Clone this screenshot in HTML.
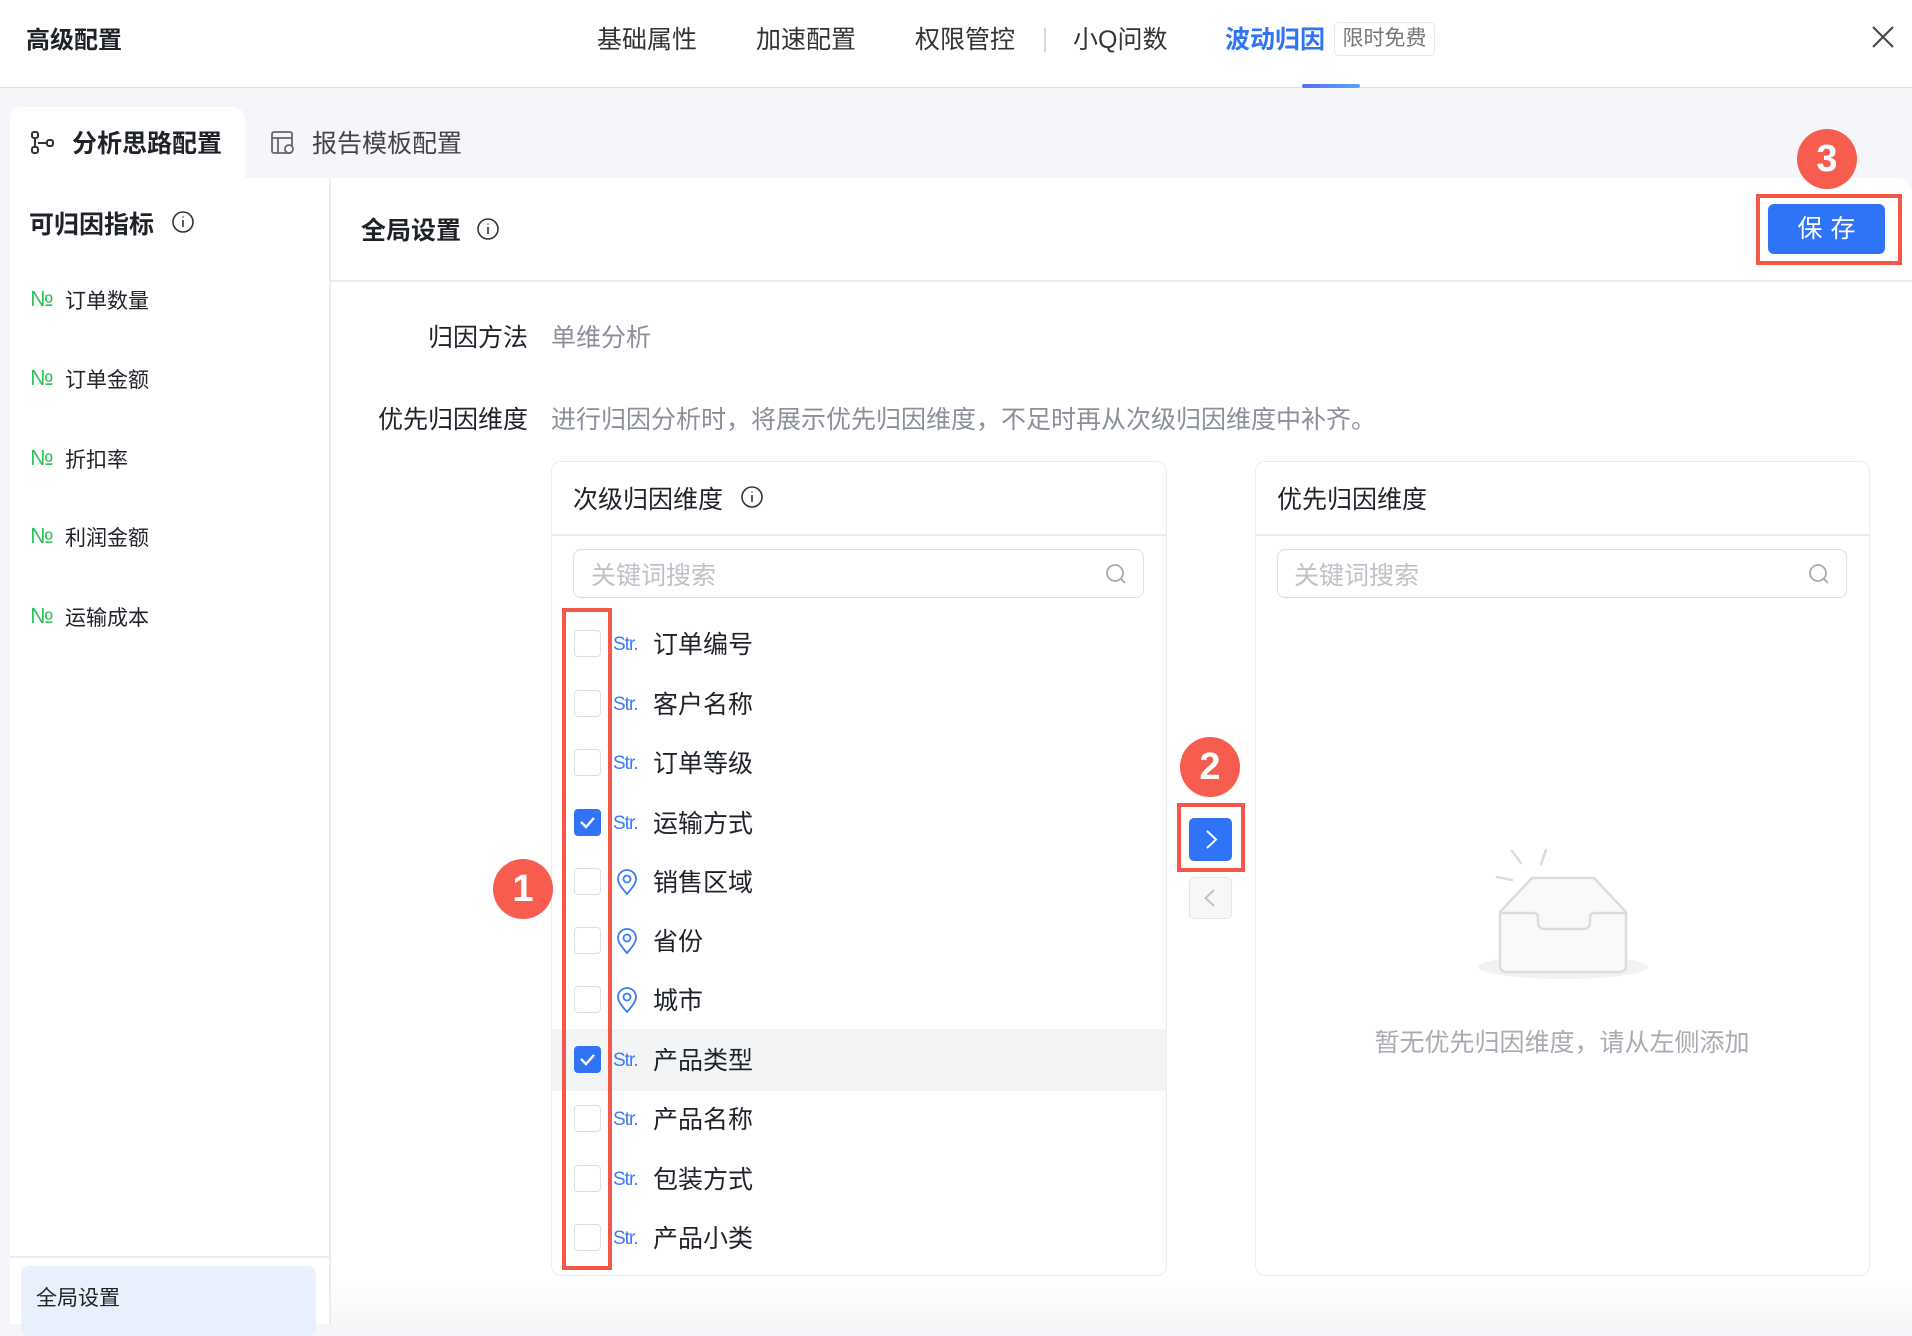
<!DOCTYPE html>
<html><head><meta charset="utf-8"><style>
*{margin:0;padding:0;box-sizing:border-box}
body{width:1912px;height:1324px;overflow:hidden;background:#f5f6f9;font-family:"Liberation Sans","Noto Sans CJK SC",sans-serif;color:#1f2329;position:relative}
.a{position:absolute;white-space:nowrap}
.cb{position:absolute;left:574px;width:27px;height:27px;border:1.5px solid #dcdfe4;border-radius:4px;background:#fff}
.cb.on{background:#2f73f6;border-color:#2f73f6}
.str{position:absolute;left:613px;color:#3b7cf7;font-size:19px;letter-spacing:-1px}
.it{position:absolute;left:653px;font-size:25px;color:#1f2329}
.no{color:#2fc25b;font-size:22px;position:absolute;left:30px}
.li{position:absolute;left:65px;font-size:21px}
.circ{position:absolute;width:60px;height:60px;border-radius:50%;background:#f65d4e;color:#fff;font-size:38px;text-align:center;line-height:60px;font-weight:bold}
.rb{position:absolute;border:4px solid #f2574a}
</style></head><body>
<!-- header -->
<div class="a" style="left:0;top:0;width:1912px;height:88px;background:#fff;border-bottom:1.5px solid #dedfe3"></div>
<div class="a" style="left:26px;top:20px;font-size:24px;font-weight:bold;color:#1f2329">高级配置</div>
<div class="a" style="left:597px;top:20px;font-size:25px;color:#333">基础属性</div>
<div class="a" style="left:756px;top:20px;font-size:25px;color:#333">加速配置</div>
<div class="a" style="left:915px;top:20px;font-size:25px;color:#333">权限管控</div>
<div class="a" style="left:1044px;top:28px;width:1.5px;height:24px;background:#d8d8d8"></div>
<div class="a" style="left:1073px;top:20px;font-size:25px;color:#333">小Q问数</div>
<div class="a" style="left:1225px;top:20px;font-size:25px;color:#2f73f6;font-weight:bold">波动归因</div>
<div class="a" style="left:1334px;top:22px;width:101px;height:34px;border:1px solid #e8e8e8;border-radius:5px;font-size:21px;color:#777;text-align:center;line-height:32px">限时免费</div>
<div class="a" style="left:1302px;top:84px;width:58px;height:4px;border-radius:2px;background:linear-gradient(90deg,#5b6cf5,#5aa4f8)"></div>
<svg class="a" style="left:1870px;top:24px" width="26" height="26" viewBox="0 0 26 26"><path d="M3 3L23 23M23 3L3 23" stroke="#444" stroke-width="2"/></svg>
<!-- tabs -->
<div class="a" style="left:10px;top:107px;width:235px;height:80px;background:#fff;border-radius:12px 12px 0 0"></div>
<svg class="a" style="left:30px;top:130px" width="26" height="26" viewBox="0 0 26 26" fill="none" stroke="#333" stroke-width="2"><rect x="2" y="2" width="6" height="6" rx="2"/><rect x="2" y="17" width="6" height="6" rx="2"/><rect x="17" y="10" width="6" height="6" rx="2"/><path d="M5 8v9M8 13h9"/></svg>
<div class="a" style="left:72px;top:124px;font-size:25px;font-weight:bold">分析思路配置</div>
<svg class="a" style="left:270px;top:130px" width="26" height="26" viewBox="0 0 26 26" fill="none" stroke="#666" stroke-width="1.8"><rect x="2" y="2" width="20" height="21" rx="2"/><path d="M2 8h20M8 8v15"/><circle cx="19" cy="19" r="4" fill="#fff"/></svg>
<div class="a" style="left:312px;top:124px;font-size:25px;color:#444">报告模板配置</div>
<!-- panels -->
<div class="a" style="left:10px;top:178px;width:320px;height:1146px;background:#fff"></div>
<div class="a" style="left:329px;top:178px;width:1.5px;height:1146px;background:#ececec"></div>
<div class="a" style="left:331px;top:178px;width:1581px;height:1146px;background:#fff;border-radius:0 14px 0 0"></div>
<div class="a" style="left:331px;top:1280px;width:1581px;height:44px;background:linear-gradient(#fff,#f7f7f8)"></div>
<!-- sidebar -->
<div class="a" style="left:29px;top:205px;font-size:25px;font-weight:bold">可归因指标</div>
<svg class="a" style="left:171px;top:210px" width="24" height="24" viewBox="0 0 24 24" fill="none" stroke="#333" stroke-width="1.6"><circle cx="12" cy="12" r="10"/><path d="M12 10v7M12 6.5v1"/></svg>
<div class="no" style="top:286px">№</div><div class="li" style="top:285px">订单数量</div>
<div class="no" style="top:365px">№</div><div class="li" style="top:364px">订单金额</div>
<div class="no" style="top:445px">№</div><div class="li" style="top:444px">折扣率</div>
<div class="no" style="top:523px">№</div><div class="li" style="top:522px">利润金额</div>
<div class="no" style="top:603px">№</div><div class="li" style="top:602px">运输成本</div>
<div class="a" style="left:10px;top:1256px;width:320px;height:1.5px;background:#ececec"></div>
<div class="a" style="left:21px;top:1266px;width:295px;height:70px;background:#e8effd;border-radius:8px"></div>
<div class="a" style="left:36px;top:1282px;font-size:21px;color:#222">全局设置</div>
<!-- main -->
<div class="a" style="left:361px;top:211px;font-size:25px;font-weight:bold">全局设置</div>
<svg class="a" style="left:476px;top:217px" width="24" height="24" viewBox="0 0 24 24" fill="none" stroke="#333" stroke-width="1.6"><circle cx="12" cy="12" r="10"/><path d="M12 10v7M12 6.5v1"/></svg>
<div class="a" style="left:331px;top:280px;width:1581px;height:1.5px;background:#ececec"></div>
<div class="a" style="left:1768px;top:204px;width:117px;height:50px;background:#2f73f6;border-radius:6px;color:#fff;font-size:25px;text-align:center;line-height:50px;letter-spacing:8px;text-indent:8px">保存</div>
<div class="rb" style="left:1756px;top:194px;width:146px;height:71px"></div>
<div class="circ" style="left:1797px;top:129px">3</div>
<div class="a" style="left:408px;top:318px;font-size:25px;width:120px;text-align:right">归因方法</div>
<div class="a" style="left:551px;top:318px;font-size:25px;color:#8a8f99">单维分析</div>
<div class="a" style="left:378px;top:400px;font-size:25px">优先归因维度</div>
<div class="a" style="left:551px;top:400px;font-size:25px;color:#8a8f99">进行归因分析时，将展示优先归因维度，不足时再从次级归因维度中补齐。</div>
<!-- left box -->
<div class="a" style="left:551px;top:461px;width:616px;height:815px;border:1.5px solid #ececec;border-radius:10px;background:#fff;overflow:hidden">
<div class="a" style="left:0;top:567px;width:616px;height:62px;background:#f3f4f6"></div>
</div>
<div class="a" style="left:573px;top:480px;font-size:25px">次级归因维度</div>
<svg class="a" style="left:740px;top:485px" width="24" height="24" viewBox="0 0 24 24" fill="none" stroke="#333" stroke-width="1.6"><circle cx="12" cy="12" r="10"/><path d="M12 10v7M12 6.5v1"/></svg>
<div class="a" style="left:552px;top:534px;width:614px;height:1.5px;background:#ececec"></div>
<div class="a" style="left:573px;top:549px;width:571px;height:49px;border:1.5px solid #dcdfe4;border-radius:8px"></div>
<div class="a" style="left:591px;top:556px;font-size:25px;color:#bfc2c8">关键词搜索</div>
<svg class="a" style="left:1104px;top:562px" width="24" height="24" viewBox="0 0 24 24" fill="none" stroke="#aaa" stroke-width="1.8"><circle cx="11" cy="11" r="8"/><path d="M17 17l4 4"/></svg>
<!-- items -->
<div class="cb" style="top:630px"></div><div class="str" style="top:634px">Str.</div><div class="it" style="top:625px">订单编号</div>
<div class="cb" style="top:690px"></div><div class="str" style="top:694px">Str.</div><div class="it" style="top:685px">客户名称</div>
<div class="cb" style="top:749px"></div><div class="str" style="top:753px">Str.</div><div class="it" style="top:744px">订单等级</div>
<div class="cb on" style="top:809px"><svg width="24" height="24" viewBox="0 0 24 24"><path d="M6 12l5 5 8-9" stroke="#fff" stroke-width="2.4" fill="none"/></svg></div><div class="str" style="top:813px">Str.</div><div class="it" style="top:804px">运输方式</div>
<div class="cb" style="top:868px"></div><svg class="a" style="left:615px;top:868px" width="24" height="28" viewBox="0 0 24 28" fill="none" stroke="#3b7cf7" stroke-width="1.8"><path d="M12 26C6 19 3 15 3 11a9 9 0 0118 0c0 4-3 8-9 15z"/><circle cx="12" cy="11" r="3.5"/></svg><div class="it" style="top:863px">销售区域</div>
<div class="cb" style="top:927px"></div><svg class="a" style="left:615px;top:927px" width="24" height="28" viewBox="0 0 24 28" fill="none" stroke="#3b7cf7" stroke-width="1.8"><path d="M12 26C6 19 3 15 3 11a9 9 0 0118 0c0 4-3 8-9 15z"/><circle cx="12" cy="11" r="3.5"/></svg><div class="it" style="top:922px">省份</div>
<div class="cb" style="top:986px"></div><svg class="a" style="left:615px;top:986px" width="24" height="28" viewBox="0 0 24 28" fill="none" stroke="#3b7cf7" stroke-width="1.8"><path d="M12 26C6 19 3 15 3 11a9 9 0 0118 0c0 4-3 8-9 15z"/><circle cx="12" cy="11" r="3.5"/></svg><div class="it" style="top:981px">城市</div>
<div class="cb on" style="top:1046px"><svg width="24" height="24" viewBox="0 0 24 24"><path d="M6 12l5 5 8-9" stroke="#fff" stroke-width="2.4" fill="none"/></svg></div><div class="str" style="top:1050px">Str.</div><div class="it" style="top:1041px">产品类型</div>
<div class="cb" style="top:1105px"></div><div class="str" style="top:1109px">Str.</div><div class="it" style="top:1100px">产品名称</div>
<div class="cb" style="top:1165px"></div><div class="str" style="top:1169px">Str.</div><div class="it" style="top:1160px">包装方式</div>
<div class="cb" style="top:1224px"></div><div class="str" style="top:1228px">Str.</div><div class="it" style="top:1219px">产品小类</div>
<div class="rb" style="left:562px;top:608px;width:50px;height:662px"></div>
<div class="circ" style="left:493px;top:859px">1</div>
<!-- middle -->
<div class="circ" style="left:1180px;top:737px">2</div>
<div class="rb" style="left:1177px;top:803px;width:68px;height:69px"></div>
<div class="a" style="left:1189px;top:818px;width:43px;height:43px;background:#2f73f6;border-radius:5px"><svg width="43" height="43" viewBox="0 0 43 43"><path d="M18 13l9 8.5-9 8.5" stroke="#fff" stroke-width="2" fill="none"/></svg></div>
<div class="a" style="left:1189px;top:877px;width:43px;height:42px;background:#f7f7f7;border:1.5px solid #e6e6e6;border-radius:5px"><svg width="40" height="40" viewBox="0 0 40 40"><path d="M24 12l-8.5 8 8.5 8" stroke="#c2c2c2" stroke-width="2" fill="none"/></svg></div>
<!-- right box -->
<div class="a" style="left:1255px;top:461px;width:615px;height:815px;border:1.5px solid #ececec;border-radius:10px;background:#fff"></div>
<div class="a" style="left:1277px;top:480px;font-size:25px">优先归因维度</div>
<div class="a" style="left:1256px;top:534px;width:613px;height:1.5px;background:#ececec"></div>
<div class="a" style="left:1277px;top:549px;width:570px;height:49px;border:1.5px solid #dcdfe4;border-radius:8px"></div>
<div class="a" style="left:1294px;top:556px;font-size:25px;color:#bfc2c8">关键词搜索</div>
<svg class="a" style="left:1807px;top:562px" width="24" height="24" viewBox="0 0 24 24" fill="none" stroke="#aaa" stroke-width="1.8"><circle cx="11" cy="11" r="8"/><path d="M17 17l4 4"/></svg>
<svg class="a" style="left:1440px;top:820px" width="280" height="180" viewBox="0 0 280 180"><ellipse cx="123" cy="147" rx="85" ry="12" fill="#f2f2f2"/><path d="M60 92L92 58h62l32 34v54a6 6 0 01-6 6H66a6 6 0 01-6-6z" fill="#f9f9f9" stroke="#dcdcdc" stroke-width="2.5"/><path d="M60 93h34a4 4 0 014 4v6a6 6 0 006 6h40a6 6 0 006-6v-6a4 4 0 014-4h32" fill="none" stroke="#dcdcdc" stroke-width="2.5"/><path d="M57 57l15 3M72 31l9 12M106 30l-5 14" stroke="#dcdcdc" stroke-width="2.5" stroke-linecap="round"/></svg>
<div class="a" style="left:1562px;top:1023px;transform:translateX(-50%);font-size:25px;color:#a8abb2">暂无优先归因维度，请从左侧添加</div>
</body></html>
